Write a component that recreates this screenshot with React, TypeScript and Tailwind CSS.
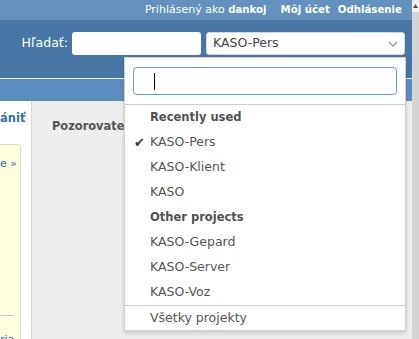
const font = "font-['DejaVu_Sans',Verdana,sans-serif]";

interface JumpItem {
  label: string;
  heading?: boolean;
  selected?: boolean;
}

const items: JumpItem[] = [
  { label: "Recently used", heading: true },
  { label: "KASO-Pers", selected: true },
  { label: "KASO-Klient" },
  { label: "KASO" },
  { label: "Other projects", heading: true },
  { label: "KASO-Gepard" },
  { label: "KASO-Server" },
  { label: "KASO-Voz" },
];

function ProjectJumpBox() {
  return (
    <div className="absolute left-[124px] top-[57px] w-[282px] rounded-b-[2px] border border-[#cfcfcf] bg-white shadow-[0_2px_4px_rgba(0,0,0,0.18)]">
      <div className="px-[8px] pb-[9px] pt-[9px]">
        <div className="flex h-[28px] items-center rounded-[4px] border border-[#5aa2dc] pl-[20px]">
          <span className="h-[17px] w-px bg-black" />
        </div>
      </div>
      <div className="border-t border-[#cfcfcf]">
        {items.map((item) => (
          <div
            key={item.label}
            className="relative flex h-[25px] items-center pl-[25px] text-[#555]"
          >
            {item.selected && (
              <span className="absolute left-[9px] top-[6px] text-[13px] leading-none text-[#3a3a3a]">
                ✔
              </span>
            )}
            <span
              className={
                item.heading
                  ? "text-[11.5px] font-bold text-[#505050]"
                  : "text-[12.5px]"
              }
            >
              {item.label}
            </span>
          </div>
        ))}
      </div>
      <div className="flex h-[25px] items-center border-t border-[#cfcfcf] pl-[25px] text-[12.5px] text-[#555]">
        Všetky projekty
      </div>
    </div>
  );
}

export default function App() {
  return (
    <div className={`relative flex h-[339px] w-[419px] overflow-hidden bg-[#eeeeee] ${font}`}>
      <div className="flex w-[412px] flex-col">
        {/* top menu */}
        <div className="flex h-[20px] shrink-0 items-center justify-end bg-[#6291bf] pr-[10px] text-[11px] text-white">
          <span>Prihlásený ako&nbsp;</span>
          <span className="text-[10.2px] font-bold">dankoj</span>
          <span className="ml-[14px] text-[10.2px] font-bold">Môj účet</span>
          <span className="ml-[8px] text-[10.2px] font-bold">Odhlásenie</span>
        </div>

        {/* header */}
        <div className="h-[58px] shrink-0 bg-[#4677a6] pr-[7px] pt-[12px]">
          <div className="flex items-center justify-end">
            <span className="mr-[4px] text-[12.5px] text-white">Hľadať:</span>
            <div className="h-[23px] w-[129px] rounded-[3px] bg-white" />
            <div className="ml-[5px] flex h-[23px] w-[199px] items-center justify-between rounded-[3px] border border-[#d8d8d8] bg-white pl-[6px] pr-[6px] text-[12.5px] text-[#444]">
              <span>KASO-Pers</span>
              <svg width="10" height="6" viewBox="0 0 10 6" fill="none">
                <path d="M1 1l4 4 4-4" stroke="#9a9a9a" strokeWidth="1.3" />
              </svg>
            </div>
          </div>
        </div>
        <div className="h-px shrink-0 bg-[#e6eef6]" />

        {/* main menu */}
        <div className="h-[22px] shrink-0 bg-[#5b8ec0]" />

        {/* content */}
        <div className="flex min-h-0 flex-1 overflow-hidden">
          <div className="w-[31px] bg-white">
            <div className="pt-[12px] text-[11.5px] font-bold leading-none text-[#2f70b0]">
              ániť
            </div>
            <div className="mt-[19px] h-[220px] w-[21px] rounded-tr-[4px] border border-l-0 border-[#dcdcc0] bg-[#ffffdd]">
              <div className="pt-[13px] text-[11px] leading-none text-[#2f70b0]">e »</div>
              <div className="mt-[146px] h-px w-[14px] bg-[#c8c8c8]" />
              <div className="pt-[18px] text-[11px] leading-none text-[#2f70b0]">ria</div>
            </div>
          </div>
          <div className="w-px bg-[#d6d6d6]" />
          <div className="flex-1 bg-[#eeeeee] pl-[20px] pt-[17px]">
            <h3 className="whitespace-nowrap text-[11.4px] font-bold text-[#555]">Pozorovatelia</h3>
          </div>
        </div>
      </div>

      {/* scrollbar */}
      <div className="flex w-[7px] flex-col bg-[#d4d4d4]">
        <div className="flex h-[12px] items-start justify-center bg-[#f0f0f0] pt-[4px]">
          <svg width="5" height="4" viewBox="0 0 5 4">
            <path d="M2.5 0L5 4H0z" fill="#505050" />
          </svg>
        </div>
      </div>

      <ProjectJumpBox />
    </div>
  );
}
